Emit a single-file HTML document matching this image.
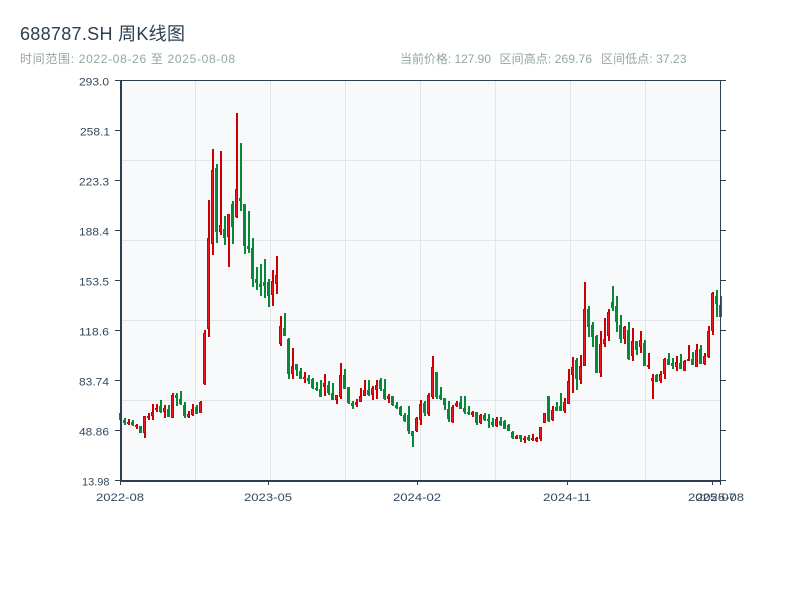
<!DOCTYPE html>
<html lang="zh"><head><meta charset="utf-8"><title>688787.SH 周K线图</title>
<style>
html,body{margin:0;padding:0;background:#fff;width:800px;height:600px;overflow:hidden}
svg{display:block}
text{font-family:"Liberation Sans","Noto Sans CJK SC",sans-serif}
.s{font-size:12px;fill:#95a5a6}
.t{font-size:11px;fill:#34495e}
</style></head><body>
<svg width="800" height="600" viewBox="0 0 800 600" xmlns="http://www.w3.org/2000/svg">
<rect width="800" height="600" fill="#fff"/>
<text x="20" y="40" font-size="18" fill="#2c3e50" letter-spacing=".3">688787.SH 周K线图</text>
<text class="s" x="20" y="63" textLength="215" lengthAdjust="spacing">时间范围: 2022-08-26 至 2025-08-08</text>
<text class="s" x="400" y="63" textLength="91" lengthAdjust="spacing">当前价格: 127.90</text>
<text class="s" x="499.500" y="63" textLength="92.500" lengthAdjust="spacing">区间高点: 269.76</text>
<text class="s" x="601" y="63" textLength="85.500" lengthAdjust="spacing">区间低点: 37.23</text>

<rect x="120" y="80" width="600" height="400" fill="#f8f9fa"/>
<g shape-rendering="crispEdges" fill="#e2e6ec">
<rect x="195" y="80" width="1" height="400"/><rect x="270" y="80" width="1" height="400"/><rect x="345" y="80" width="1" height="400"/><rect x="420" y="80" width="1" height="400"/><rect x="495" y="80" width="1" height="400"/><rect x="570" y="80" width="1" height="400"/><rect x="645" y="80" width="1" height="400"/>
<rect x="120" y="160" width="600" height="1"/><rect x="120" y="240" width="600" height="1"/><rect x="120" y="320" width="600" height="1"/><rect x="120" y="400" width="600" height="1"/>
</g>

<g shape-rendering="crispEdges" fill="none">
<!-- green wicks -->
<path stroke="#068a3a" stroke-width="2" d="M121 413V420M125 418V425M133 420V426M141 426V433M161 400V413M169 405V417M177 393V406M181 391V405M185 402V418M197 405V414M217 164V243M225 216V245M233 201V244M241 143V211M245 204V254M249 211V253M253 238V287M257 267V290M261 264V296M265 259V298M269 279V307M285 313V336M289 338V379M297 364V376M301 368V379M309 375V384M313 378V389M317 382V391M321 380V397M329 381V395M333 383V400M345 369V389M349 387V404M353 401V409M369 380V396M381 378V391M385 379V400M393 396V406M397 402V409M401 406V416M405 413V422M409 406V434M413 431V447M425 401V416M437 372V399M441 387V400M445 398V410M449 401V422M461 396V409M465 396V414M469 406V415M477 412V425M485 413V421M489 414V428M493 418V427M501 417V426M505 420V429M509 424V431M513 431V439M521 435V442M529 435V441M549 396V422M557 402V411M561 393V411M577 358V390M589 306V337M593 322V347M597 335V373M613 286V311M617 296V332M621 315V343M629 322V360M637 341V355M645 340V366M657 374V382M669 353V365M673 358V369M681 354V369M693 352V365M701 345V364M717 290V317M721 296V317"/>
<!-- green bodies -->
<path stroke="#068a3a" stroke-width="3" d="M120.500 413V420M124.500 420V423M132.500 422V425M140.500 426V433M160.500 406V412M168.500 409V417M176.500 395V398M180.500 399V404M184.500 405V416M196.500 407V414M216.500 168V232M224.500 229V238M232.500 204V227M240.500 198V201M244.500 204V246M248.500 246V249M252.500 248V279M256.500 279V283M260.500 284V287M264.500 282V286M268.500 282V296M284.500 328V336M288.500 339V374M296.500 364V370M300.500 371V379M308.500 378V381M312.500 379V388M316.500 388V390M320.500 389V397M328.500 385V393M332.500 393V400M344.500 375V389M348.500 387V403M352.500 403V406M368.500 390V395M380.500 380V389M384.500 389V399M392.500 396V405M396.500 405V408M400.500 407V415M404.500 415V421M408.500 415V431M412.500 431V436M424.500 403V413M436.500 372V397M440.500 395V399M444.500 398V405M448.500 409V419M460.500 402V409M464.500 408V412M468.500 412V414M476.500 412V423M484.500 415V420M488.500 419V421M492.500 422V425M500.500 421V425M504.500 421V429M508.500 425V431M512.500 432V438M520.500 435V439M528.500 437V440M548.500 396V421M556.500 407V411M560.500 406V411M576.500 360V379M588.500 309V327M592.500 325V337M596.500 336V373M612.500 302V308M616.500 306V322M620.500 325V339M628.500 330V359M636.500 341V350M644.500 343V366M656.500 375V382M668.500 359V365M672.500 363V366M680.500 363V369M692.500 359V365M700.500 349V364M716.500 296V304M720.500 305V317"/>
<!-- red wicks -->
<path stroke="#cc0000" stroke-width="2" d="M129 419V425M137 424V429M145 416V438M149 413V420M153 404V420M157 404V412M165 405V418M173 393V418M189 411V418M193 404V416M201 401V413M205 330V385M209 200V337M213 149V255M221 151V235M229 214V267M237 113V218M273 270V306M277 256V294M281 316V346M293 348V379M305 372V383M325 374V396M337 395V404M341 363V399M357 399V407M361 388V402M365 380V396M373 386V400M377 380V399M389 394V403M417 417V432M421 400V425M429 393V416M433 356V399M453 405V423M457 401V407M473 411V417M481 414V424M497 417V427M517 435V439M525 436V443M533 434V441M537 437V442M541 427V441M545 413V423M553 406V421M565 398V413M569 369V404M573 357V393M581 355V384M585 282V366M601 331V377M605 318V347M609 309V341M625 326V344M633 328V361M641 331V353M649 353V369M653 374V399M661 371V383M665 358V379M677 356V371M685 360V371M689 345V361M697 344V367M705 353V365M709 326V358M713 292V335"/>
<!-- red bodies edge -->
<path stroke="#cc0000" stroke-width="3" d="M128.500 422V424M136.500 425V427M144.500 416V433M148.500 416V418M152.500 412V416M156.500 408V410M164.500 408V412M172.500 395V418M188.500 414V417M192.500 409V415M200.500 402V413M204.500 333V384M208.500 238V329M212.500 170V244M220.500 225V232M228.500 214V237M236.500 189V217M272.500 281V295M276.500 275V284M280.500 326V344M292.500 366V374M304.500 377V379M324.500 383V387M336.500 395V400M340.500 375V397M356.500 402V405M360.500 396V402M364.500 390V396M372.500 388V395M376.500 385V390M388.500 396V399M416.500 418V431M420.500 404V420M428.500 395V414M432.500 367V397M452.500 407V422M456.500 403V406M472.500 412V415M480.500 415V423M496.500 419V426M516.500 436V439M524.500 438V440M532.500 438V440M536.500 438V441M540.500 427V439M544.500 413V423M552.500 410V420M564.500 402V411M568.500 381V404M572.500 367V375M580.500 366V380M584.500 309V366M600.500 344V373M604.500 339V344M608.500 312V336M624.500 327V339M632.500 341V356M640.500 340V347M648.500 365V367M652.500 378V381M660.500 374V381M664.500 359V374M676.500 362V367M684.500 361V371M688.500 359V361M696.500 350V367M704.500 356V364M708.500 331V357M712.500 293V331"/>
<!-- red bodies face -->
<path stroke="#f01620" stroke-width="1" d="M128.500 423V424M136.500 426V427M144.500 417V432M148.500 417V418M152.500 413V415M156.500 409V410M164.500 409V411M172.500 396V417M188.500 415V416M192.500 410V414M200.500 403V412M204.500 334V383M208.500 239V328M212.500 171V243M220.500 226V231M228.500 215V236M236.500 190V216M272.500 282V294M276.500 276V283M280.500 327V343M292.500 367V373M304.500 378V379M324.500 384V386M336.500 396V399M340.500 376V396M356.500 403V404M360.500 397V401M364.500 391V395M372.500 389V394M376.500 386V389M388.500 397V398M416.500 419V430M420.500 405V419M428.500 396V413M432.500 368V396M452.500 408V421M456.500 404V405M472.500 413V414M480.500 416V422M496.500 420V425M516.500 437V438M524.500 439V440M532.500 439V440M536.500 439V440M540.500 428V438M544.500 414V422M552.500 411V419M564.500 403V410M568.500 382V403M572.500 368V374M580.500 367V379M584.500 310V365M600.500 345V372M604.500 340V343M608.500 313V335M624.500 328V338M632.500 342V355M640.500 341V346M652.500 379V380M660.500 375V380M664.500 360V373M676.500 363V366M684.500 362V370M696.500 351V366M704.500 357V363M708.500 332V356M712.500 294V330"/>
</g>

<g shape-rendering="crispEdges" fill="#2c3e50">
<rect x="120" y="80" width="600" height="1"/>
<rect x="120" y="80" width="2" height="402"/>
<rect x="120" y="480" width="601" height="2"/>
<rect x="720" y="80" width="1" height="402"/>
<!-- left ticks -->
<rect x="115" y="80" width="5" height="1"/><rect x="115" y="130" width="5" height="1"/><rect x="115" y="180" width="5" height="1"/><rect x="115" y="230" width="5" height="1"/><rect x="115" y="280" width="5" height="1"/><rect x="115" y="330" width="5" height="1"/><rect x="115" y="380" width="5" height="1"/><rect x="115" y="430" width="5" height="1"/><rect x="115" y="480" width="5" height="1"/>
<!-- right ticks -->
<rect x="721" y="80" width="5" height="1"/><rect x="721" y="130" width="5" height="1"/><rect x="721" y="180" width="5" height="1"/><rect x="721" y="230" width="5" height="1"/><rect x="721" y="280" width="5" height="1"/><rect x="721" y="330" width="5" height="1"/><rect x="721" y="380" width="5" height="1"/><rect x="721" y="430" width="5" height="1"/><rect x="721" y="480" width="5" height="1"/>
<!-- bottom ticks -->
<rect x="120" y="482" width="1" height="3"/><rect x="268" y="482" width="1" height="3"/><rect x="417" y="482" width="1" height="3"/><rect x="567" y="482" width="1" height="3"/><rect x="712" y="482" width="1" height="3"/><rect x="720" y="482" width="1" height="3"/>
</g>

<g>
<text class="t" x="79" y="85.500" textLength="30" lengthAdjust="spacingAndGlyphs">293.0</text>
<text class="t" x="80" y="135.500" textLength="30" lengthAdjust="spacingAndGlyphs">258.1</text>
<text class="t" x="79" y="185.500" textLength="30" lengthAdjust="spacingAndGlyphs">223.3</text>
<text class="t" x="79" y="235.500" textLength="30" lengthAdjust="spacingAndGlyphs">188.4</text>
<text class="t" x="79" y="285.500" textLength="30" lengthAdjust="spacingAndGlyphs">153.5</text>
<text class="t" x="79" y="335.500" textLength="30" lengthAdjust="spacingAndGlyphs">118.6</text>
<text class="t" x="79" y="385.500" textLength="30" lengthAdjust="spacingAndGlyphs">83.74</text>
<text class="t" x="79" y="435.500" textLength="30" lengthAdjust="spacingAndGlyphs">48.86</text>
<text class="t" x="82" y="485.500" textLength="27.500" lengthAdjust="spacingAndGlyphs">13.98</text>
</g>
<g>
<text class="t" x="96" y="501" textLength="48" lengthAdjust="spacingAndGlyphs">2022-08</text>
<text class="t" x="244" y="501" textLength="48" lengthAdjust="spacingAndGlyphs">2023-05</text>
<text class="t" x="393" y="501" textLength="48" lengthAdjust="spacingAndGlyphs">2024-02</text>
<text class="t" x="543" y="501" textLength="48" lengthAdjust="spacingAndGlyphs">2024-11</text>
<text class="t" x="688" y="501" textLength="48" lengthAdjust="spacingAndGlyphs">2025-07</text>
<text class="t" x="696" y="501" textLength="48" lengthAdjust="spacingAndGlyphs">2025-08</text>
</g>
</svg>
</body></html>
